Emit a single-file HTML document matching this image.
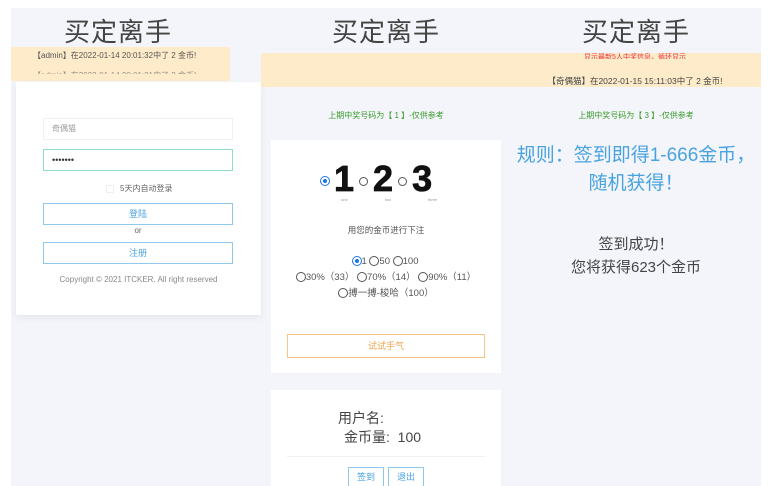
<!DOCTYPE html>
<html><head><meta charset="utf-8"><style>
*{margin:0;padding:0;box-sizing:border-box}
body{width:773px;height:486px;background:#fff;position:relative;overflow:hidden;font-family:"Liberation Sans","Noto Sans CJK SC",sans-serif;color:#555}
.a{position:absolute}
.bg{left:11px;top:8px;width:750px;height:478px;background:#f3f5fa}
.t{font-size:26px;color:#444;text-align:center;width:220px;top:12px;letter-spacing:1px}
.card{background:#fff}
.inp{position:absolute;left:27px;width:190px;height:22px;border:1px solid #eef0f3;font-size:8px;padding-left:8px;line-height:20px;color:#999}
.btn{position:absolute;border:1px solid #8fc9ef;color:#4aa3e0;font-size:9px;text-align:center}
.c{text-align:center}
.rad{display:inline-block;width:10px;height:10px;border:1px solid #555;border-radius:50%;vertical-align:middle}
.on{border:2.5px solid #fff;background:#1a73e8;box-shadow:0 0 0 1px #1a73e8}
.sp{margin:0 5px}
</style></head><body>
<div class="a bg"></div>
<div class="a t" style="left:8px">买定离手</div>
<div class="a t" style="left:276px">买定离手</div>
<div class="a t" style="left:526px">买定离手</div>

<div class="a" style="left:11px;top:47px;width:219px;height:34px;background:#fdebc9;font-size:8px;color:#555;padding:3px 0 0 22px">【admin】在2022-01-14 20:01:32中了 2 金币!<div style="margin-top:9px;height:4px;overflow:hidden;opacity:.6">【admin】在2022-01-14 20:01:31中了 2 金币!</div></div>
<div class="a" style="left:261px;top:53px;width:500px;height:34px;background:#fdebc9"></div>
<div class="a c" style="left:520px;top:52px;width:230px;font-size:7px;color:#e33;height:7px;overflow:hidden">显示最新5人中奖信息，循环显示</div>
<div class="a c" style="left:520px;top:75px;width:230px;font-size:8.5px;color:#444">【奇偶猫】在2022-01-15 15:11:03中了 2 金币!</div>

<div class="a card" style="left:16px;top:82px;width:245px;height:233px;box-shadow:0 3px 8px rgba(0,0,0,.06)">
<div class="inp" style="top:36px">奇偶猫</div>
<div class="inp" style="top:67px;border:1.5px solid #8fdfc8;color:#333;font-size:9px">•••••••</div>
<div class="a" style="left:90px;top:101px;font-size:8px;color:#666"><span style="display:inline-block;width:8px;height:8px;border:1px solid #eee;vertical-align:middle;margin-right:6px"></span>5天内自动登录</div>
<div class="btn" style="left:27px;top:121px;width:190px;height:22px;line-height:20px">登陆</div>
<div class="a c" style="left:27px;top:144px;width:190px;font-size:8px;color:#666">or</div>
<div class="btn" style="left:27px;top:160px;width:190px;height:22px;line-height:20px">注册</div>
<div class="a c" style="left:0;top:193px;width:245px;font-size:8px;color:#888">Copyright © 2021 ITCKER. All right reserved</div>
</div>

<div class="a c" style="left:276px;top:110px;width:220px;font-size:8px;color:#3a9a2a">上期中奖号码为【 1 】-仅供参考</div>
<div class="a c" style="left:526px;top:110px;width:220px;font-size:8px;color:#3a9a2a">上期中奖号码为【 3 】-仅供参考</div>

<div class="a card" style="left:271px;top:140px;width:230px;height:233px">
<div class="a" style="left:50px;top:18px;font-size:36px;font-weight:900;color:#111;line-height:42px;-webkit-text-stroke:0.8px #111">
<span class="rad on" style="width:8px;height:8px;margin-right:5px"></span>1<span class="rad sp" style="width:9px;height:9px"></span>2<span class="rad sp" style="width:9px;height:9px"></span>3</div>
<div class="a" style="left:70px;top:57px;font-size:4px;color:#999">one</div>
<div class="a" style="left:114px;top:57px;font-size:4px;color:#999">two</div>
<div class="a" style="left:157px;top:57px;font-size:4px;color:#999">three</div>
<div class="a c" style="left:0;top:84px;width:230px;font-size:8.5px;color:#555">用您的金币进行下注</div>
<div class="a c" style="left:0;top:114px;width:230px;font-size:9.5px;color:#555;line-height:16px">
<span class="rad on" style="width:8px;height:8px;border-width:2px"></span>1 <span class="rad"></span>50 <span class="rad"></span>100<br>
<span class="rad"></span>30%（33） <span class="rad"></span>70%（14） <span class="rad"></span>90%（11）<br>
<span class="rad"></span>搏一搏-梭哈（100）</div>
<div class="a c" style="left:16px;top:194px;width:198px;height:24px;border:1px solid #f7c58a;color:#f0a34a;font-size:9px;line-height:22px">试试手气</div>
</div>

<div class="a card" style="left:271px;top:390px;width:230px;height:96px">
<div class="a" style="left:67px;top:18px;font-size:14px;color:#444">用户名:</div>
<div class="a" style="left:73px;top:37px;font-size:14px;color:#444">金币量:&nbsp;&nbsp;100</div>
<div class="a" style="left:16px;top:66px;width:198px;height:1px;background:#f0f0f0"></div>
<div class="btn" style="left:77px;top:77px;width:36px;height:19px;line-height:18px;border-bottom:none">签到</div>
<div class="btn" style="left:117px;top:77px;width:36px;height:19px;line-height:18px;border-bottom:none">退出</div>
</div>

<div class="a c" style="left:511px;top:142px;width:250px;font-size:19px;color:#4aa3e0;line-height:28px">规则：签到即得1-666金币，<br>随机获得！</div>
<div class="a c" style="left:511px;top:233px;width:250px;font-size:15px;color:#444;line-height:23px">签到成功！<br>您将获得623个金币</div>
</body></html>
